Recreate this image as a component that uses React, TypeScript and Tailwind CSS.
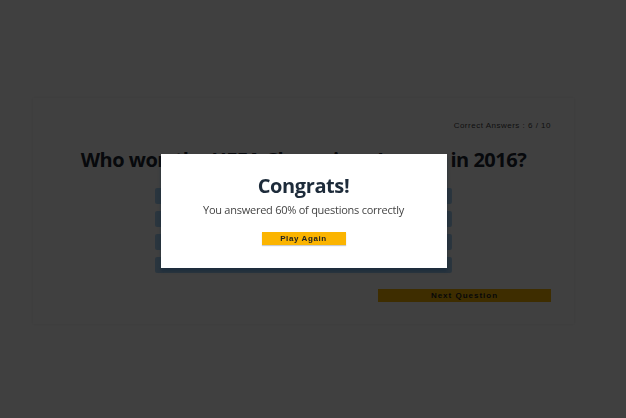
const answers = ["a1", "a2", "a3", "a4"];

export default function App() {
  return (
    <div className="min-h-[418px] bg-white pt-[98px] pl-[33px] font-['Open_Sans',sans-serif]">
      <div className="relative flex h-[226px] w-[541px] flex-col bg-white pt-[23px] pr-[23px] pl-[23px] shadow-[0_0_3px_rgba(0,0,0,0.1)]">
        <p className="text-right font-['Liberation_Sans',sans-serif] text-[8px] leading-[10px] tracking-[0.5px] text-[#444]">
          Correct Answers : 6 / 10
        </p>
        <h1 className="mt-[15px] text-center text-[20px] font-bold leading-[28px] tracking-[-0.5px] text-[#1c2733]">
          Who won the UEFA Champions League in 2016?
        </h1>
        <div className="mx-auto mt-[14px] flex w-[297px] flex-col gap-[7px]">
          {answers.map((answer) => (
            <button
              key={answer}
              type="button"
              aria-label={answer}
              className="h-[16px] rounded-[2px] bg-[#a6d2f5]"
            />
          ))}
        </div>
        <button
          type="button"
          className="mt-[16px] ml-auto h-[13px] w-[173px] bg-[#f5b400] font-['Liberation_Sans',sans-serif] text-[8px] font-bold leading-[13px] tracking-[1px] text-[#222]"
        >
          Next Question
        </button>

        <div className="absolute left-1/2 top-1/2 z-20 flex h-[114px] w-[286px] -translate-x-1/2 -translate-y-1/2 flex-col items-center bg-white pt-[18px] shadow-[0_3px_3px_rgba(20,40,60,0.6)]">
          <h2 className="text-[20px] font-bold leading-[28px] tracking-[-0.4px] text-[#1d2b3a]">
            Congrats!
          </h2>
          <p className="mt-[2px] text-[11px] leading-[16px] tracking-[-0.25px] text-[#444]">
            You answered 60% of questions correctly
          </p>
          <button
            type="button"
            className="mt-[14px] h-[13px] w-[84px] bg-[#fbb400] font-['Liberation_Sans',sans-serif] text-[8px] font-bold leading-[13px] tracking-[0.6px] text-[#222] shadow-[0_1px_1px_rgba(0,0,0,0.2)]"
          >
            Play Again
          </button>
        </div>
      </div>
      <div className="fixed inset-0 z-10 bg-black/75" />
    </div>
  );
}
